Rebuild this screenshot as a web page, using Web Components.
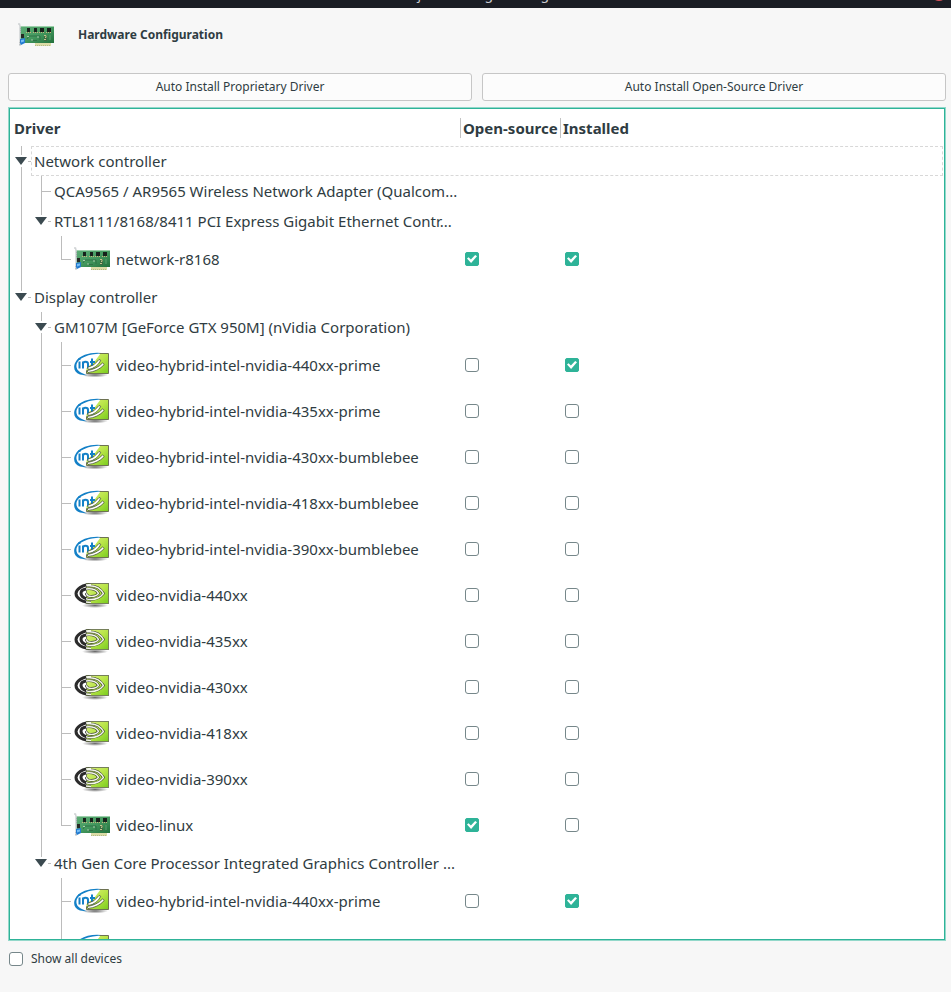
<!DOCTYPE html>
<html lang="en">
<head>
<meta charset="utf-8">
<title>Hardware Configuration</title>
<style>
  html, body { height: 100%; margin: 0; }
  body { font-family: "Noto Sans", "Open Sans", sans-serif; color: #2f3c42; background: #f7f7f7; }
</style>
</head>
<body>
<settings-window heading="Hardware Configuration"></settings-window>
<script>
const define = (name, html, setup) => {
  const tpl = document.createElement('template');
  tpl.innerHTML = html;
  customElements.define(name, class extends HTMLElement {
    connectedCallback() {
      if (this.shadowRoot) return;
      const root = this.attachShadow({ mode: 'open' });
      root.append(tpl.content.cloneNode(true));
      if (setup) setup(this, root);
    }
  });
};

/* Pictures for the device kinds */
const CARD = `<svg viewBox="0 0 36 24" width="36" height="24">
  <defs><linearGradient id="g" x2="1" y2="1"><stop offset="0" stop-color="#5fae78"/><stop offset=".5" stop-color="#459a60"/><stop offset="1" stop-color="#22703c"/></linearGradient></defs>
  <path d="M17 19h16v4h-16z" fill="#dcdca6"/><path d="M17 22.500h16" stroke="#b4b98a" stroke-dasharray="1 1"/>
  <rect x="2" y="3" width="34" height="17" fill="url(#g)"/>
  <path d="M2 3h34v1h-34z" fill="#9ccfaa"/>
  <path d="M9 5h3v4h-3zM16 5h3v4h-3zM22 5h4v4h-4zM29 5h4v4h-4z" fill="#17211b"/>
  <path d="M8 9.500h5M15 9.500h5M21 9.500h5M28 9.500h5" stroke="#c9b27c" stroke-dasharray="1 1"/>
  <path d="M9 16l2-3h11v4M13 17.500h6" fill="none" stroke="#2f7346"/>
  <path d="M9 13.500h2M13 17h2M19 14h2" stroke="#a9cfae"/>
  <path d="M26 12h3v6h-3z" fill="#3c6a42"/><path d="M26 12.500h2v2h-1M26 16.500h2" fill="none" stroke="#c0c68c"/>
  <path d="M32 12v5" stroke="#5a9f6e"/>
  <path d="M0 1h1.500l.500 2v20" fill="none" stroke="#d0d3d5" stroke-width="1.500"/><path d="M2.500 5v5M2 19v4" stroke="#a5abae" stroke-dasharray="1 1"/>
  <path d="M3 11h3v4h-3z" fill="#272a25"/><path d="M2 16l5-1v5l-4 2-1-2z" fill="#237bd0"/><path d="M3 17l3-.500v2l-3 1z" fill="#75bdf4"/>
</svg>`;
const SHADES = `<defs><linearGradient id="g" x2="1" y2="1"><stop offset="0" stop-color="#dcf07f"/><stop offset=".5" stop-color="#b9e548"/><stop offset="1" stop-color="#79cc1e"/></linearGradient>
  <radialGradient id="s"><stop offset="0" stop-color="#444" stop-opacity=".8"/><stop offset="1" stop-color="#444" stop-opacity="0"/></radialGradient>
  <clipPath id="l"><path d="M0 0h12v26H0z"/></clipPath><clipPath id="r"><path d="M12 0h24v26H12z"/></clipPath></defs>`;
const HYBRID = `<svg viewBox="0 0 36 26" width="36" height="26">${SHADES}
  <ellipse cx="21" cy="23" rx="13" ry="2.500" fill="url(#s)"/>
  <path d="M31 1.500C20-.800 7 2 2.500 8.500-1.500 14-.500 20.500 6 22.500l7 1-4-2C1.500 18.500 1 13 4.500 8.800 9 4 18 1.500 31 1.500z" fill="#1380c7"/>
  <path d="M34.500 1.500h-8L21 9 12.500 16v5.500h22z" fill="url(#g)"/><path d="M25.500 1.500h9v20h-22v-3" fill="none" stroke="#6d7252"/>
  <path d="M5.500 9.500v7M5.500 6v2M9 16.500v-7M9 12c0-3 5-3 5 0v4.500M18 6.500v7q0 2 1.500 2.500M16 10h5" fill="none" stroke="#1380c7" stroke-width="2"/>
  <path d="M13.500 15.500Q21 13.500 25 7.500l1.800.8Q23 16 14.500 17.500z" fill="#fff" stroke="#4b563a" stroke-width=".8"/>
  <path d="M13 18.500Q23 17 28.500 11l1.800 1.500Q24 19.500 14 20.500z" fill="#fff" stroke="#4b563a" stroke-width=".8"/>
</svg>`;
const EYE = '<path d="M17 2.500C8 2.500 2 7.500 2 11.500 2 16 8 20.500 17 20.500M13 3.800C22 3 27 7 29.500 11.500 26 16 21 17.500 17 17.500 11 17.500 7 14.500 7 11.200 7 8 11 6.800 15 6.800 20 6.800 23 8.500 24.500 11.300 23 13.500 20.500 14.400 17.500 14.400 14.500 14.400 12.500 13 12.500 11.200"/>';
const NVIDIA = `<svg viewBox="0 0 36 26" width="36" height="26">${SHADES}
  <ellipse cx="21" cy="23.500" rx="13" ry="2.500" fill="url(#s)"/>
  <rect x="12.500" y="1.500" width="22" height="20" fill="url(#g)" stroke="#76805a"/>
  <g fill="none" stroke="#2b2b2b" stroke-width="3" clip-path="url(#l)">${EYE}</g>
  <g fill="none" clip-path="url(#r)"><g stroke="#39402c" stroke-width="2.600">${EYE}</g><g stroke="#f4f8ea" stroke-width="1.400">${EYE}</g></g>
</svg>`;

define('device-icon', `<style>:host{display:flex;flex:none;width:36px}svg{display:block}</style>`,
  (el, root) => root.append(document.createRange().createContextualFragment(
    { card: CARD, hybrid: HYBRID, nvidia: NVIDIA }[el.getAttribute('kind')])));

define('check-box', `<style>
  :host{display:flex}
  label{display:flex;align-items:center;gap:8px;font-size:12px;line-height:20px}
  input{appearance:none;box-sizing:border-box;width:14px;height:14px;margin:0;flex:none;border:1px solid #76878a;border-radius:3px;background:#fff;display:grid;place-items:center}
  input:checked{background:#2eb398;border-color:#2eb398;border-radius:2px}
  input:checked::before{content:"";width:10px;height:8px;background:#fff;clip-path:polygon(0 45%,16% 28%,39% 55%,82% 0,100% 17%,41% 100%)}
  </style><label><input type="checkbox"><slot></slot></label>`,
  (el, root) => {
    const box = root.querySelector('input');
    box.checked = el.hasAttribute('checked');
    if (el.hasAttribute('name')) box.setAttribute('aria-label', el.getAttribute('name'));
  });

define('push-button', `<style>
  :host{display:flex;flex:1}
  button{flex:1;box-sizing:border-box;height:28px;padding:0 8px;border:1px solid #c6c6c6;border-radius:3px;background:#fcfcfc;color:inherit;font:12px/20px "Noto Sans",sans-serif}
  </style><button type="button"><slot></slot></button>`);

/* One 20px lane per tree level: pass | none | tee | end | open | last */
define('tree-branch', `<style>
  :host{display:flex;height:100%;align-items:center;white-space:nowrap;box-sizing:border-box;padding-left:1px}
  i{--c:linear-gradient(#bcbcbc,#bcbcbc);flex:none;align-self:stretch;width:20px;display:grid;place-items:center;background-repeat:no-repeat}
  .pass{background-image:var(--c);background-position:10px 0;background-size:1px 100%}
  .tee{background-image:var(--c),var(--c);background-position:10px 0,10px 50%;background-size:1px 100%,10px 1px}
  .end{background-image:var(--c),var(--c);background-position:10px 0,10px 50%;background-size:1px 50%,10px 1px}
  .open{background-image:var(--c),var(--c),var(--c);background-position:10px 0,10px 100%,17px 50%;background-size:1px calc(50% - 6px),1px calc(50% - 6px),4px 1px}
  .last{background-image:var(--c),var(--c);background-position:10px 0,17px 50%;background-size:1px calc(50% - 6px),4px 1px}
  button{border:0;padding:0;background:none;width:12px;height:8px;display:flex}
  .body{flex:1;min-width:0;display:flex;align-items:center;gap:6px;margin-left:3px;align-self:stretch;box-sizing:border-box}
  :host([focus]) .body{margin-left:0;margin-right:1px;padding-left:2px;border:1px dashed #d8d8d8}
  </style><div class="body"><slot></slot></div>`,
  (el, root) => {
    const body = root.querySelector('.body');
    for (const lane of el.getAttribute('lanes').split(' ')) {
      const i = document.createElement('i');
      i.className = lane;
      if (lane === 'open' || lane === 'last')
        i.innerHTML = '<button type="button" aria-expanded="true" aria-label="Collapse"><svg width="12" height="8"><path d="M0 0h12L6 8z" fill="#3b4a50"/></svg></button>';
      body.before(i);
    }
  });

const H = 'video-hybrid-intel-nvidia-', V = 'video-nvidia-';
const ROWS = [
  ['open', 'Network controller', 'focus'],
  ['pass tee', 'QCA9565 / AR9565 Wireless Network Adapter (Qualcom...'],
  ['pass last', 'RTL8111/8168/8411 PCI Express Gigabit Ethernet Contr...'],
  ['pass none end', 'network-r8168', 'card', 1, 1],
  ['last', 'Display controller'],
  ['none open', 'GM107M [GeForce GTX 950M] (nVidia Corporation)'],
  ['none pass tee', H + '440xx-prime', 'hybrid', 0, 1],
  ['none pass tee', H + '435xx-prime', 'hybrid', 0, 0],
  ['none pass tee', H + '430xx-bumblebee', 'hybrid', 0, 0],
  ['none pass tee', H + '418xx-bumblebee', 'hybrid', 0, 0],
  ['none pass tee', H + '390xx-bumblebee', 'hybrid', 0, 0],
  ['none pass tee', V + '440xx', 'nvidia', 0, 0],
  ['none pass tee', V + '435xx', 'nvidia', 0, 0],
  ['none pass tee', V + '430xx', 'nvidia', 0, 0],
  ['none pass tee', V + '418xx', 'nvidia', 0, 0],
  ['none pass tee', V + '390xx', 'nvidia', 0, 0],
  ['none pass end', 'video-linux', 'card', 1, 0],
  ['none last', '4th Gen Core Processor Integrated Graphics Controller ...'],
  ['none none tee', H + '440xx-prime', 'hybrid', 0, 1],
  ['none none tee', '', 'hybrid']
];

define('driver-tree', `<style>
  :host{display:block;overflow:hidden;min-height:0;border:1px solid #93d8ca;box-sizing:border-box;background:#fff}
  .view{box-sizing:border-box;height:100%;overflow:hidden;border:1px solid #2eb398}
  table{width:100%;border-collapse:collapse;table-layout:fixed;font-size:15px;line-height:20px}
  th,td{padding:0;text-align:left}
  thead tr{height:37px}
  th{font-weight:700}
  th:first-child{padding-left:4px}
  th span{display:block;border-left:1px solid #c4c4c4;padding-left:2px}
  .group{height:30px}.device{height:46px}
  .driver{width:450px}.flag{width:100px}
  td{height:inherit}
  td+td{padding-left:5px}
  </style>
  <div class="view"><table>
  <colgroup><col class="driver"><col class="flag"><col></colgroup>
  <thead><tr><th scope="col">Driver</th><th scope="col"><span>Open-source</span></th><th scope="col"><span>Installed</span></th></tr></thead>
  <tbody></tbody></table></div>`,
  (el, root) => {
    root.querySelector('tbody').innerHTML = ROWS.map(([lanes, text, kind, open, inst]) => {
      const dev = kind && kind !== 'focus';
      const box = (on, what) => on === undefined ? '' : `<check-box name="${text} ${what}"${on ? ' checked' : ''}></check-box>`;
      return dev
        ? `<tr class="device"><td><tree-branch lanes="${lanes}"><device-icon kind="${kind}"></device-icon>${text}</tree-branch></td><td>${box(open, 'open-source')}</td><td>${box(inst, 'installed')}</td></tr>`
        : `<tr class="group"><td colspan="3"><tree-branch lanes="${lanes}"${kind ? ' focus' : ''}>${text}</tree-branch></td></tr>`;
    }).join('');
  });

define('title-bar', `<style>
  :host{display:grid;grid-template-columns:1fr auto 1fr;height:8px;overflow:hidden;align-content:end;align-items:end;background:#1b1e25;color:#c9ccd0;font-size:14px;line-height:20px}
  span{grid-column:2;padding-bottom:4px}
  button{justify-self:end;width:16px;height:16px;margin:0 4px 7px 0;padding:0;border:0;border-radius:8px;background:#d9545c}
  </style><span><slot></slot></span><button type="button" aria-label="Close"></button>`);

define('settings-window', `<style>
  :host{display:flex;flex-direction:column;height:100vh}
  header{display:flex;align-items:center;gap:24px;padding:0 18px;height:54px}
  h1{margin:0;font-size:12px;line-height:20px;font-weight:700}
  .actions{display:flex;gap:10px;padding:11px 5px 6px 8px}
  driver-tree{flex:1;margin:0 5px 0 8px}
  footer{padding:8px 9px 23px}
  </style>
  <title-bar>Manjaro Settings Manager</title-bar>
  <header><device-icon kind="card"></device-icon><h1></h1></header>
  <div class="actions"><push-button>Auto Install Proprietary Driver</push-button><push-button>Auto Install Open-Source Driver</push-button></div>
  <driver-tree></driver-tree>
  <footer><check-box>Show all devices</check-box></footer>`,
  (el, root) => { root.querySelector('h1').textContent = el.getAttribute('heading'); });
</script>
</body>
</html>
